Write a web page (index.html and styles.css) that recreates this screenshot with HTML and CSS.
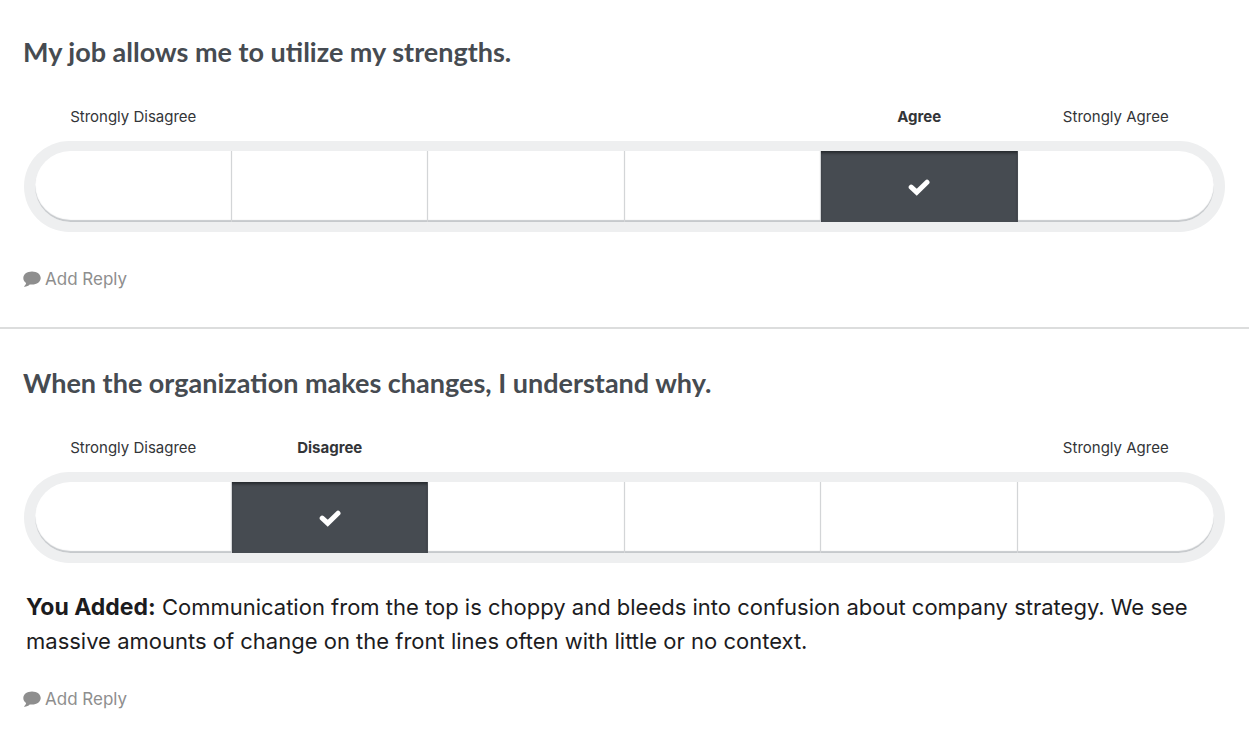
FILE: index.html
```html
<!DOCTYPE html>
<html lang="en">

<head>
  <meta charset="UTF-8">
  <meta name="viewport" content="width=device-width, initial-scale=1.0">
  <title>Survey</title>
  <link rel="stylesheet" href="styles.css">
</head>

<body>
  <!-- icons shared by both questions -->
  <svg class="icons" aria-hidden="true">
    <symbol id="check" viewBox="0 0 22 18">
      <path d="M3.2 9.200 L8.700 14.200 L19 4.200" fill="none" stroke="#fff" stroke-width="5" stroke-linejoin="miter" stroke-linecap="round" />
    </symbol>
    <symbol id="comment" viewBox="0 0 18 16">
      <path d="M9 0.5C4 0.5 0.3 3.3 0.3 7c0 2 1 3.700 2.800 5C2.900 13.300 2.200 14.400 1.200 15.200c-.3.3-.1.600.3.600 2.200-.2 4-1.100 5.200-2.400 .7.100 1.500.2 2.300.2 5 0 8.700-2.900 8.700-6.600S14 .5 9 .5z" fill="currentColor" />
    </symbol>
  </svg>

  <section class="question">
    <h2>My job allows me to utilize my strengths.</h2>
    <div class="labels">
      <label for="q1-1">Strongly Disagree</label>
      <label for="q1-5" class="selected">Agree</label>
      <label for="q1-6">Strongly Agree</label>
    </div>
    <div class="scale" role="radiogroup" aria-label="My job allows me to utilize my strengths.">
      <div class="cell"><input type="radio" name="q1" id="q1-1"><svg class="check"><use href="#check" /></svg></div>
      <div class="cell"><input type="radio" name="q1" id="q1-2" aria-label="Disagree"><svg class="check"><use href="#check" /></svg></div>
      <div class="cell"><input type="radio" name="q1" id="q1-3" aria-label="Somewhat Disagree"><svg class="check"><use href="#check" /></svg></div>
      <div class="cell"><input type="radio" name="q1" id="q1-4" aria-label="Somewhat Agree"><svg class="check"><use href="#check" /></svg></div>
      <div class="cell"><input type="radio" name="q1" id="q1-5" checked><svg class="check"><use href="#check" /></svg></div>
      <div class="cell"><input type="radio" name="q1" id="q1-6"><svg class="check"><use href="#check" /></svg></div>
    </div>
    <button type="button" class="reply"><svg class="comment"><use href="#comment" /></svg>Add Reply</button>
  </section>

  <section class="question">
    <h2>When the organization makes changes, I understand why.</h2>
    <div class="labels">
      <label for="q2-1">Strongly Disagree</label>
      <label for="q2-2" class="selected second">Disagree</label>
      <label for="q2-6">Strongly Agree</label>
    </div>
    <div class="scale" role="radiogroup" aria-label="When the organization makes changes, I understand why.">
      <div class="cell"><input type="radio" name="q2" id="q2-1"><svg class="check"><use href="#check" /></svg></div>
      <div class="cell"><input type="radio" name="q2" id="q2-2" checked><svg class="check"><use href="#check" /></svg></div>
      <div class="cell"><input type="radio" name="q2" id="q2-3" aria-label="Somewhat Disagree"><svg class="check"><use href="#check" /></svg></div>
      <div class="cell"><input type="radio" name="q2" id="q2-4" aria-label="Somewhat Agree"><svg class="check"><use href="#check" /></svg></div>
      <div class="cell"><input type="radio" name="q2" id="q2-5" aria-label="Agree"><svg class="check"><use href="#check" /></svg></div>
      <div class="cell"><input type="radio" name="q2" id="q2-6"><svg class="check"><use href="#check" /></svg></div>
    </div>
    <p class="added"><strong>You Added:</strong> Communication from the top is choppy and bleeds into confusion about company strategy. We see massive amounts of change on the front lines often with little or no context.</p>
    <button type="button" class="reply"><svg class="comment"><use href="#comment" /></svg>Add Reply</button>
  </section>
</body>

</html>
```
FILE: styles.css
```css
body {
  margin: 0;
  background-color: #fff;
  color: #1c1c1e;
  font-family: Inter, "Liberation Sans", sans-serif;
}

.icons {
  display: none;
}

.question {
  padding: 34px 23px 37px;
}

.question + .question {
  padding-top: 36px;
  padding-bottom: 30px;
  border-top: 2px solid #dcdddd;
}

h2 {
  margin: 0;
  color: #464b51;
  font-family: Lato, sans-serif;
  font-size: 27px;
  font-weight: 700;
  line-height: 36px;
}

.labels {
  display: grid;
  grid-template-columns: repeat(6, 1fr);
  margin-top: 37px;
  padding: 0 12px;
  color: #333538;
  font-size: 15px;
  line-height: 20px;
  text-align: center;
}

.labels label:last-child {
  grid-column: 6;
}

.labels .selected {
  grid-column: 5;
  font-weight: 700;
}

.labels .second {
  grid-column: 2;
}

.scale {
  display: grid;
  grid-template-columns: repeat(6, 1fr);
  margin: 14px 1px 0;
  padding: 10px 11px;
  border-radius: 46px;
  background-color: #eeeff0;
}

.cell {
  display: grid;
  place-items: center;
  height: 71px;
}

.cell input,
.cell .check {
  grid-area: 1 / 1;
}

.cell input {
  appearance: none;
  box-sizing: border-box;
  width: 100%;
  height: 100%;
  margin: 0;
  border-right: 1px solid #d3d5d7;
  background-color: #fff;
  box-shadow: inset 0 -2px 1px #c6c9cc;
  cursor: pointer;
}

.cell:first-child input {
  border-radius: 36px 0 0 36px;
}

.cell:last-child input {
  border-right: 0;
  border-radius: 0 36px 36px 0;
}

.cell input:checked {
  border-right-color: #464b51;
  background-color: #464b51;
  box-shadow: inset 0 3px 3px -1px #26292d;
}

.check {
  width: 22px;
  height: 18px;
  visibility: hidden;
  pointer-events: none;
}

.cell input:checked + .check {
  visibility: visible;
}

.added {
  margin: 27px 0 0;
  padding: 0 3px;
  font-size: 22px;
  line-height: 34px;
}

.added strong {
  font-size: 23px;
}

.reply {
  display: flex;
  align-items: center;
  gap: 4px;
  margin: 36px 0 0;
  padding: 0;
  border: 0;
  background: none;
  color: #8e8e8e;
  font-family: inherit;
  font-size: 17px;
  line-height: 22px;
  cursor: pointer;
}

.added + .reply {
  margin-top: 30px;
}

.comment {
  width: 18px;
  height: 16px;
}
```
